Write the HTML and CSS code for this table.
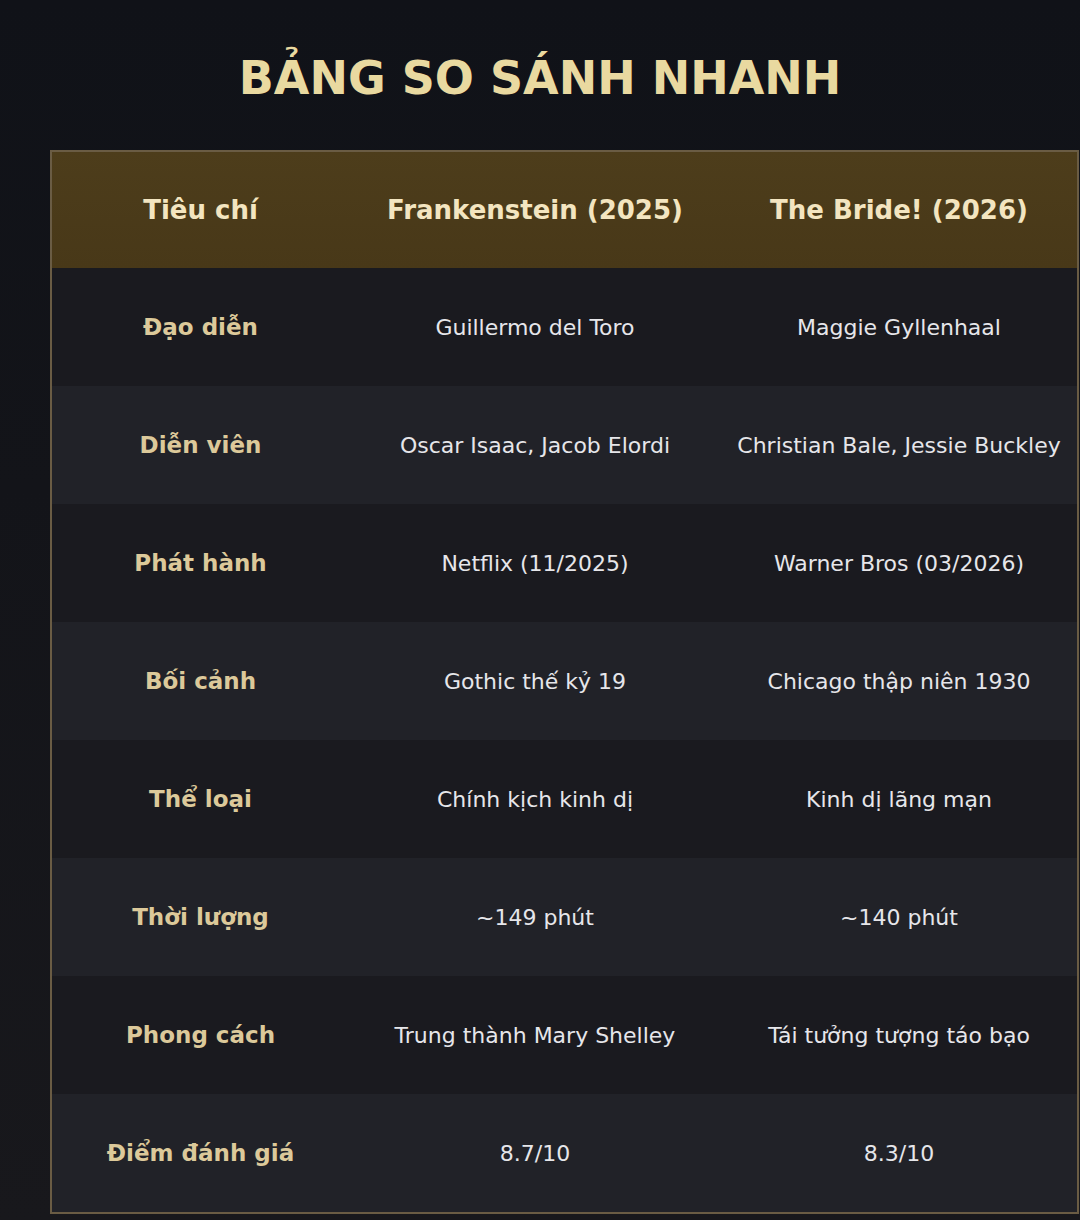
FILE: index.html
```html
<!DOCTYPE html>
<html lang="vi">
<head>
<meta charset="utf-8">
<title>Bảng so sánh nhanh</title>
<link rel="stylesheet" href="styles.css">
</head>
<body>
<div class="page">
  <h1 class="title">BẢNG SO SÁNH NHANH</h1>
  <table class="compare">
    <thead>
      <tr>
        <th class="c1">Tiêu chí</th>
        <th class="c2">Frankenstein (2025)</th>
        <th class="c3">The Bride! (2026)</th>
      </tr>
    </thead>
    <tbody>
      <tr><td class="label">Đạo diễn</td><td>Guillermo del Toro</td><td>Maggie Gyllenhaal</td></tr>
      <tr><td class="label">Diễn viên</td><td>Oscar Isaac, Jacob Elordi</td><td>Christian Bale, Jessie Buckley</td></tr>
      <tr><td class="label">Phát hành</td><td>Netflix (11/2025)</td><td>Warner Bros (03/2026)</td></tr>
      <tr><td class="label">Bối cảnh</td><td>Gothic thế kỷ 19</td><td>Chicago thập niên 1930</td></tr>
      <tr><td class="label">Thể loại</td><td>Chính kịch kinh dị</td><td>Kinh dị lãng mạn</td></tr>
      <tr><td class="label">Thời lượng</td><td>~149 phút</td><td>~140 phút</td></tr>
      <tr><td class="label">Phong cách</td><td>Trung thành Mary Shelley</td><td>Tái tưởng tượng táo bạo</td></tr>
      <tr><td class="label">Điểm đánh giá</td><td>8.7/10</td><td>8.3/10</td></tr>
    </tbody>
  </table>
</div>
</body>
</html>
```
FILE: styles.css
```css
html, body {
  margin: 0;
  padding: 0;
}
body {
  width: 1080px;
  height: 1220px;
  overflow: hidden;
  background: linear-gradient(180deg, #101218 0%, #131419 40%, #18181c 100%);
  font-family: "DejaVu Sans", "Noto Sans", sans-serif;
}
.page {
  padding-top: 50px;
}
.title {
  margin: 0 0 44px 0;
  height: 56px;
  line-height: 56px;
  text-align: center;
  font-size: 46px;
  font-weight: bold;
  color: #e9d9a0;
}
.compare {
  margin-left: 50px;
  width: 1029px;
  border-collapse: collapse;
  border: 2px solid #6a5c44;
  table-layout: fixed;
}
.compare th, .compare td {
  height: 118px;
  padding: 0;
  text-align: center;
  vertical-align: middle;
}
.compare thead tr {
  background: linear-gradient(180deg, #4d3d1b 0%, #483818 100%);
}
.compare th {
  height: 116px;
  font-size: 26px;
  font-weight: bold;
  color: #f3e5c0;
}
.compare th.c1 { width: 297px; }
.compare th.c2 { width: 372px; }
.compare tbody tr:nth-child(odd) {
  background: #1a1a1f;
}
.compare tbody tr:nth-child(even) {
  background: #212228;
}
.compare td {
  font-size: 22px;
  color: #e6e6ea;
}
.compare td.label {
  font-size: 23px;
  font-weight: bold;
  color: #dcc99a;
}
```
